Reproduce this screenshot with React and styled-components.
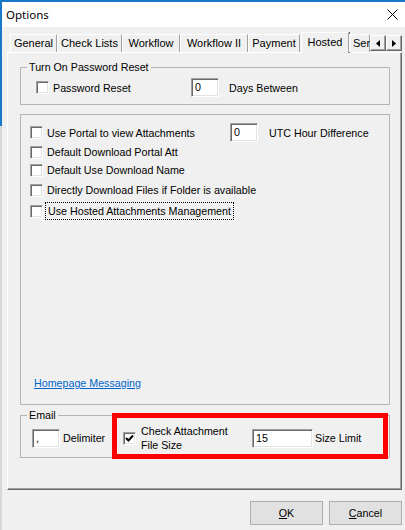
import React from "react";
import styled, { createGlobalStyle } from "styled-components";

const GlobalStyle = createGlobalStyle`
  html, body { margin: 0; padding: 0; background: #f0f0f0; }
  body {
    font-family: "Liberation Sans", Arial, sans-serif;
    font-size: 10.7px;
    color: #000;
  }
  * { box-sizing: border-box; }
`;

const Window = styled.div`
  width: 405px;
  height: 530px;
  border-top: 2px solid #1979c9;
  border-left: 2px solid #1979c9;
  border-image: linear-gradient(to bottom, #1979c9 0, #1979c9 125px, #d8d8d8 125px, #d8d8d8 100%) 1;
  background: #f0f0f0;
  overflow: hidden;
`;

const TitleBar = styled.div`
  height: 25px;
  background: #fff;
  display: flex;
  align-items: center;
  justify-content: space-between;
  padding: 0 7px 1px 4px;
`;

const Title = styled.span`
  font-family: "Noto Sans", "Open Sans", sans-serif;
  font-size: 11.5px;
  color: #000;
`;

const Body = styled.div`
  padding: 5px 3px 0 5px;
`;

const TabStrip = styled.div`
  display: flex;
  height: 21px;
  margin-left: 3px;
  position: relative;
  z-index: 1;
`;

const TabViewport = styled.div`
  width: 360px;
  height: 21px;
  overflow: hidden;
  display: flex;
  align-items: flex-start;
`;

const Tab = styled.div`
  flex: none;
  width: ${(p) => p.$w}px;
  height: ${(p) => (p.$active ? 21 : 18)}px;
  margin-top: ${(p) => (p.$active ? 0 : 2)}px;
  margin-left: ${(p) => p.$ml || 0}px;
  background: #f0f0f0;
  border-top: 1px solid #fff;
  border-left: 1px solid #fff;
  border-right: 1px solid #a0a0a0;
  box-shadow: ${(p) => (p.$active ? "1px 0 0 #696969" : "none")};
  font-family: "Liberation Sans", Arial, sans-serif;
  font-size: 11px;
  line-height: ${(p) => (p.$active ? 18 : 16)}px;
  text-align: ${(p) => (p.$clip ? "left" : "center")};
  padding-left: ${(p) => (p.$clip ? 3 : 0)}px;
  white-space: nowrap;
  color: #000;
`;

const Arrows = styled.div`
  display: flex;
  margin-top: 3px;
  height: 16px;
`;

const ArrowBtn = styled.div`
  width: 16px;
  height: 16px;
  background: #f0f0f0;
  border-top: 1px solid #fff;
  border-left: 1px solid #fff;
  border-right: 1px solid #696969;
  border-bottom: 1px solid #696969;
  box-shadow: inset -1px -1px 0 #a0a0a0;
  display: flex;
  align-items: center;
  justify-content: center;
`;

const Panel = styled.div`
  width: 395px;
  height: 438px;
  margin-top: -1px;
  border-top: 1px solid #fff;
  border-left: 1px solid #fff;
  border-right: 1px solid #696969;
  border-bottom: 1px solid #696969;
  box-shadow: inset -1px -1px 0 #a0a0a0;
  padding: 7px 11px 0 12px;
  display: flex;
  flex-direction: column;
`;

const GroupBox = styled.fieldset`
  margin: 0;
  padding: 0 0 ${(p) => p.$pb}px 6px;
  border: 1px solid #b4b4b4;
  min-width: 0;
`;

const Legend = styled.legend`
  padding: 0 2px;
  line-height: 14px;
`;

const PlainGroup = styled.div`
  margin-top: 9px;
  height: 291px;
  border: 1px solid #b4b4b4;
  padding: 8px 0 14px 9px;
  display: flex;
  flex-direction: column;
`;

const Row = styled.div`
  display: flex;
  align-items: center;
  height: ${(p) => p.$h}px;
  margin-top: ${(p) => p.$mt || 0}px;
  padding-left: ${(p) => p.$pl || 0}px;
`;

const CheckItem = styled.label`
  display: flex;
  align-items: center;
  flex: none;
  width: ${(p) => (p.$w ? `${p.$w}px` : "auto")};
`;

const Box = styled.span`
  flex: none;
  width: 13px;
  height: 13px;
  background: #fff;
  border-top: 1px solid #a0a0a0;
  border-left: 1px solid #a0a0a0;
  border-right: 1px solid #fff;
  border-bottom: 1px solid #fff;
  box-shadow: inset 1px 1px 0 #696969, inset -1px -1px 0 #e3e3e3;
  display: flex;
  align-items: center;
  justify-content: center;
`;

const CheckText = styled.span`
  margin-left: ${(p) => p.$gap || 4}px;
  line-height: 14px;
  white-space: nowrap;
  ${(p) => (p.$focus ? "outline: 1px dotted #000; outline-offset: 1px; padding: 0 1px;" : "")}
`;

const TextBox = styled.div`
  flex: none;
  width: ${(p) => p.$w}px;
  height: 19px;
  background: #fff;
  border-top: 1px solid #a0a0a0;
  border-left: 1px solid #a0a0a0;
  border-right: 1px solid #fff;
  border-bottom: 1px solid #fff;
  box-shadow: inset 1px 1px 0 #696969, inset -1px -1px 0 #e3e3e3;
  padding: 0 0 0 3px;
  line-height: 17px;
  color: #000;
`;

const FieldLabel = styled.span`
  flex: none;
  margin-left: ${(p) => p.$ml || 0}px;
  width: ${(p) => (p.$w ? `${p.$w}px` : "auto")};
  white-space: nowrap;
`;

const Link = styled.a`
  margin-top: auto;
  margin-left: 4px;
  line-height: 14px;
  color: #0066cc;
  text-decoration: underline;
  align-self: flex-start;
`;

const EmailWrap = styled.div`
  position: relative;
  margin-top: 3px;
`;

const Highlight = styled.div`
  position: absolute;
  left: 92px;
  top: 5px;
  width: 276px;
  height: 46px;
  border: 5px solid #ff0000;
  pointer-events: none;
`;

const TwoLine = styled.span`
  margin-left: 5px;
  line-height: 14px;
  width: 111px;
  flex: none;
`;

const ButtonBar = styled.div`
  display: flex;
  justify-content: flex-end;
  gap: 6px;
  padding-top: 11px;
`;

const Button = styled.button`
  width: 73px;
  height: 24px;
  background: #e1e1e1;
  border: 1px solid #adadad;
  font-family: "Liberation Sans", Arial, sans-serif;
  font-size: 10.7px;
  color: #000;
  padding: 0;
`;

const Check = ({ checked }) => (
  <Box>
    {checked && (
      <svg width="9" height="9" viewBox="0 0 9 9">
        <path d="M1 4 L3.5 6.5 L8 1.5" stroke="#000" strokeWidth="2" fill="none" />
      </svg>
    )}
  </Box>
);

const tabs = [
  { name: "General", w: 47 },
  { name: "Check Lists", w: 65 },
  { name: "Workflow", w: 58 },
  { name: "Workflow II", w: 68 },
  { name: "Payment", w: 52 },
  { name: "Hosted", w: 48, active: true, ml: 1 },
  { name: "Ser", w: 21, clip: true },
];

export default function App() {
  return (
    <>
      <GlobalStyle />
      <Window>
        <TitleBar>
          <Title>Options</Title>
          <svg width="11" height="11" viewBox="0 0 11 11">
            <path d="M0.5 0.5 L10.5 10.5 M10.5 0.5 L0.5 10.5" stroke="#000" strokeWidth="1" />
          </svg>
        </TitleBar>
        <Body>
          <TabStrip>
            <TabViewport>
              {tabs.map((t) => (
                <Tab key={t.name} $w={t.w} $active={t.active} $ml={t.ml} $clip={t.clip}>
                  {t.name}
                </Tab>
              ))}
            </TabViewport>
            <Arrows>
              <ArrowBtn>
                <svg width="4" height="7" viewBox="0 0 4 7">
                  <path d="M4 0 L0 3.5 L4 7 Z" fill="#000" />
                </svg>
              </ArrowBtn>
              <ArrowBtn>
                <svg width="4" height="7" viewBox="0 0 4 7">
                  <path d="M0 0 L4 3.5 L0 7 Z" fill="#000" />
                </svg>
              </ArrowBtn>
            </Arrows>
          </TabStrip>
          <Panel>
            <GroupBox $pb={7}>
              <Legend>Turn On Password Reset</Legend>
              <Row $h={19} $mt={4} $pl={9}>
                <CheckItem $w={155}>
                  <Check />
                  <CheckText>Password Reset</CheckText>
                </CheckItem>
                <TextBox $w={28}>0</TextBox>
                <FieldLabel $ml={10}>Days Between</FieldLabel>
              </Row>
            </GroupBox>

            <PlainGroup>
              <Row $h={19}>
                <CheckItem $w={200}>
                  <Check />
                  <CheckText>Use Portal to view Attachments</CheckText>
                </CheckItem>
                <TextBox $w={28}>0</TextBox>
                <FieldLabel $ml={11}>UTC Hour Difference</FieldLabel>
              </Row>
              <Row $h={18} $mt={1}>
                <CheckItem>
                  <Check />
                  <CheckText>Default Download Portal Att</CheckText>
                </CheckItem>
              </Row>
              <Row $h={18}>
                <CheckItem>
                  <Check />
                  <CheckText>Default Use Download Name</CheckText>
                </CheckItem>
              </Row>
              <Row $h={18} $mt={2}>
                <CheckItem>
                  <Check />
                  <CheckText>Directly Download Files if Folder is available</CheckText>
                </CheckItem>
              </Row>
              <Row $h={18} $mt={3}>
                <CheckItem>
                  <Check />
                  <CheckText $focus>Use Hosted Attachments Management</CheckText>
                </CheckItem>
              </Row>
              <Link href="#">Homepage Messaging</Link>
            </PlainGroup>

            <EmailWrap>
              <GroupBox $pb={5}>
                <Legend>Email</Legend>
                <Row $h={28} $mt={2} $pl={5}>
                  <TextBox $w={28}>,</TextBox>
                  <FieldLabel $ml={3} $w={60}>Delimiter</FieldLabel>
                  <Check checked />
                  <TwoLine>
                    Check Attachment
                    <br />
                    File Size
                  </TwoLine>
                  <TextBox $w={61}>15</TextBox>
                  <FieldLabel $ml={2}>Size Limit</FieldLabel>
                </Row>
              </GroupBox>
              <Highlight />
            </EmailWrap>
          </Panel>
          <ButtonBar>
            <Button>
              <u>O</u>K
            </Button>
            <Button>
              <u>C</u>ancel
            </Button>
          </ButtonBar>
        </Body>
      </Window>
    </>
  );
}
